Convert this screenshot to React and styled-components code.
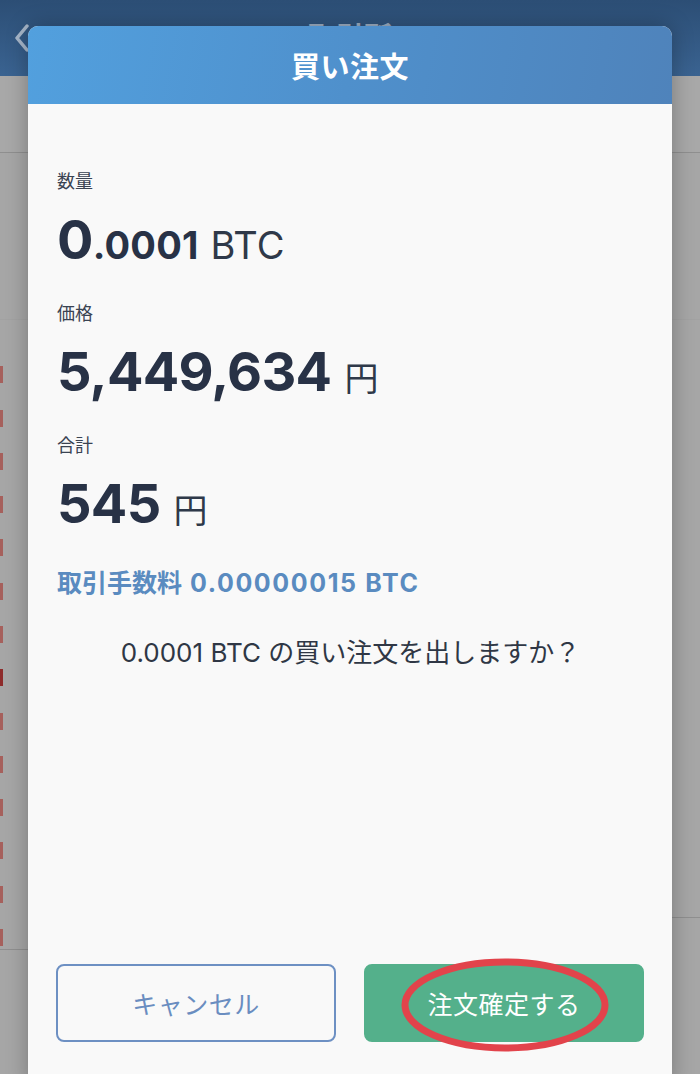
import React from "react";
import styled, { createGlobalStyle } from "styled-components";

const Global = createGlobalStyle`
  html, body { margin: 0; padding: 0; }
  body {
    font-family: Inter, "Noto Sans CJK JP", sans-serif;
    background: #a6a6a6;
  }
  * { box-sizing: border-box; }
`;

const Screen = styled.div`
  position: relative;
  width: 700px;
  height: 1074px;
  overflow: hidden;
  background: #a6a6a6;
`;

/* ---------- dimmed app behind the dialog ---------- */
const BackApp = styled.div`
  display: flex;
  flex-direction: column;
  height: 100%;
`;

const NavBar = styled.div`
  height: 76px;
  flex: none;
  background: linear-gradient(180deg, #2c4e75 0%, #3a6391 100%);
  display: grid;
  grid-template-columns: 1fr auto 1fr;
  align-items: start;
  padding: 19px 14px 0;
`;

const NavLeft = styled.div`
  display: flex;
  align-items: center;
  gap: 10px;
  color: rgba(220, 228, 236, 0.65);
  font-size: 26px;
`;

const NavTitle = styled.div`
  font-family: "Noto Sans CJK JP", sans-serif;
  font-size: 28px;
  font-weight: 700;
  line-height: 1;
  padding-top: 2px;
  color: rgba(230, 236, 242, 0.6);
`;

const InfoRow = styled.div`
  height: 77px;
  flex: none;
  background: #a8a8a8;
  border-bottom: 1px solid #8f8f8f;
`;

const ChartBlock = styled.div`
  height: 167px;
  flex: none;
  background: #a6a6a6;
  border-bottom: 1px solid #a2a2a2;
`;

const BookGrid = styled.div`
  flex: 1;
  display: grid;
  grid-template-columns: 1fr 1fr;
  padding-top: 23px;
`;

const BookColumn = styled.div`
  display: flex;
  flex-direction: column;
`;

const BookList = styled.div`
  display: flex;
  flex-direction: column;
  height: ${(p) => p.$height}px;
  border-bottom: 1px solid #8f8f8f;
`;

const BookRow = styled.div`
  height: 43.35px;
  display: flex;
  align-items: flex-end;
  padding-bottom: 3px;
`;

const AskMark = styled.span`
  width: 3px;
  height: 17px;
  background: ${(p) => (p.$strong ? "#8e2b2b" : "#a6605c")};
`;

/* ---------- dialog ---------- */
const Dialog = styled.div`
  position: absolute;
  top: 26px;
  left: 28px;
  width: 644px;
  height: 1060px;
  background: #f9f9f9;
  border-radius: 10px 10px 0 0;
  box-shadow: 0 0 22px rgba(0, 0, 0, 0.28);
  display: flex;
  flex-direction: column;
`;

const DialogHeader = styled.div`
  height: 78px;
  flex: none;
  border-radius: 10px 10px 0 0;
  background: linear-gradient(100deg, #52a0de 0%, #4f90cc 50%, #4f83bb 100%);
  display: flex;
  align-items: center;
  justify-content: center;
  color: #ffffff;
  font-family: "Noto Sans CJK JP", sans-serif;
  font-size: 29px;
  font-weight: 700;
  letter-spacing: 0.5px;
`;

const DialogBody = styled.div`
  flex: 1;
  display: flex;
  flex-direction: column;
  padding: 67px 28px 44px 29px;
`;

const Field = styled.div`
  display: flex;
  flex-direction: column;
  gap: 24px;
  & + & {
    margin-top: 36px;
  }
`;

const FieldLabel = styled.div`
  font-family: "Noto Sans CJK JP", sans-serif;
  font-size: 18px;
  line-height: 18px;
  color: #3a4352;
`;

const FieldValue = styled.div`
  font-family: Inter, "Noto Sans CJK JP", sans-serif;
  font-size: 54px;
  line-height: 54px;
  font-weight: 700;
  letter-spacing: -0.7px;
  color: #283246;
  white-space: nowrap;
`;

const Decimal = styled.span`
  font-size: 38px;
  line-height: 1;
  letter-spacing: 0.2px;
`;

const Unit = styled.span`
  font-family: ${(p) => (p.$jp ? '"Noto Sans CJK JP", sans-serif' : 'Inter, sans-serif')};
  font-size: ${(p) => (p.$jp ? 34 : 38)}px;
  font-weight: 400;
  line-height: 1;
  letter-spacing: 0;
  margin-left: ${(p) => p.$gap}px;
  color: #2f3949;
`;

const Fee = styled.div`
  margin-top: 38px;
  font-family: "Noto Sans CJK JP", sans-serif;
  font-size: 25px;
  line-height: 25px;
  font-weight: 700;
  color: #5a8bc0;
  white-space: nowrap;
`;

const FeeAmount = styled.span`
  font-family: Inter, sans-serif;
  letter-spacing: 1.6px;
  margin-left: 8px;
`;

const Question = styled.div`
  margin-top: 44px;
  text-align: center;
  font-family: Inter, "Noto Sans CJK JP", sans-serif;
  font-size: 26px;
  line-height: 26px;
  color: #2f3745;
  white-space: nowrap;
`;

const Spacer = styled.div`
  flex: 1;
`;

const Footer = styled.div`
  display: grid;
  grid-template-columns: 1fr 1fr;
  gap: 28px;
  margin-left: -1px;
`;

const ActionButton = styled.button`
  position: relative;
  height: 78px;
  border-radius: 8px;
  font-family: "Noto Sans CJK JP", sans-serif;
  font-size: 25px;
  font-weight: 400;
  letter-spacing: 0.5px;
  cursor: pointer;
  border: 2px solid ${(p) => (p.$primary ? "#54b08b" : "#6d90c3")};
  background: ${(p) => (p.$primary ? "#54b08b" : "#f9f9f9")};
  color: ${(p) => (p.$primary ? "#ffffff" : "#6a8dc0")};
`;

const Highlight = styled.svg`
  position: absolute;
  left: 32px;
  top: -9px;
  overflow: visible;
  pointer-events: none;
`;

const Chevron = () => (
  <svg width="16" height="28" viewBox="0 0 16 28" fill="none">
    <path d="M13 2 L3 14 L13 26" stroke="rgba(205,214,224,0.75)" strokeWidth="3.5" strokeLinecap="round" strokeLinejoin="round" />
  </svg>
);

const leftRows = Array.from({ length: 14 }, (_, i) => i);

export default function App() {
  return (
    <Screen>
      <Global />
      <BackApp>
        <NavBar>
          <NavLeft>
            <Chevron />
            <span>戻る</span>
          </NavLeft>
          <NavTitle>取引所</NavTitle>
          <div />
        </NavBar>
        <InfoRow />
        <ChartBlock />
        <BookGrid>
          <BookColumn>
            <BookList $height={607}>
              {leftRows.map((i) => (
                <BookRow key={i}>
                  <AskMark $strong={i === 7} />
                </BookRow>
              ))}
            </BookList>
          </BookColumn>
          <BookColumn>
            <BookList $height={575} />
          </BookColumn>
        </BookGrid>
      </BackApp>

      <Dialog>
        <DialogHeader>買い注文</DialogHeader>
        <DialogBody>
          <Field>
            <FieldLabel>数量</FieldLabel>
            <FieldValue>
              0<Decimal>.0001</Decimal>
              <Unit $gap={12}>BTC</Unit>
            </FieldValue>
          </Field>
          <Field>
            <FieldLabel>価格</FieldLabel>
            <FieldValue>
              5,449,634<Unit $jp $gap={13}>円</Unit>
            </FieldValue>
          </Field>
          <Field>
            <FieldLabel>合計</FieldLabel>
            <FieldValue>
              545<Unit $jp $gap={13}>円</Unit>
            </FieldValue>
          </Field>
          <Fee>
            取引手数料<FeeAmount>0.00000015 BTC</FeeAmount>
          </Fee>
          <Question>0.0001 BTC の買い注文を出しますか？</Question>
          <Spacer />
          <Footer>
            <ActionButton type="button">キャンセル</ActionButton>
            <ActionButton type="button" $primary>
              注文確定する
              <Highlight width="214" height="96" viewBox="0 0 214 96">
                <ellipse cx="107" cy="48" rx="100" ry="43" fill="none" stroke="#e2434b" strokeWidth="7" />
              </Highlight>
            </ActionButton>
          </Footer>
        </DialogBody>
      </Dialog>
    </Screen>
  );
}
